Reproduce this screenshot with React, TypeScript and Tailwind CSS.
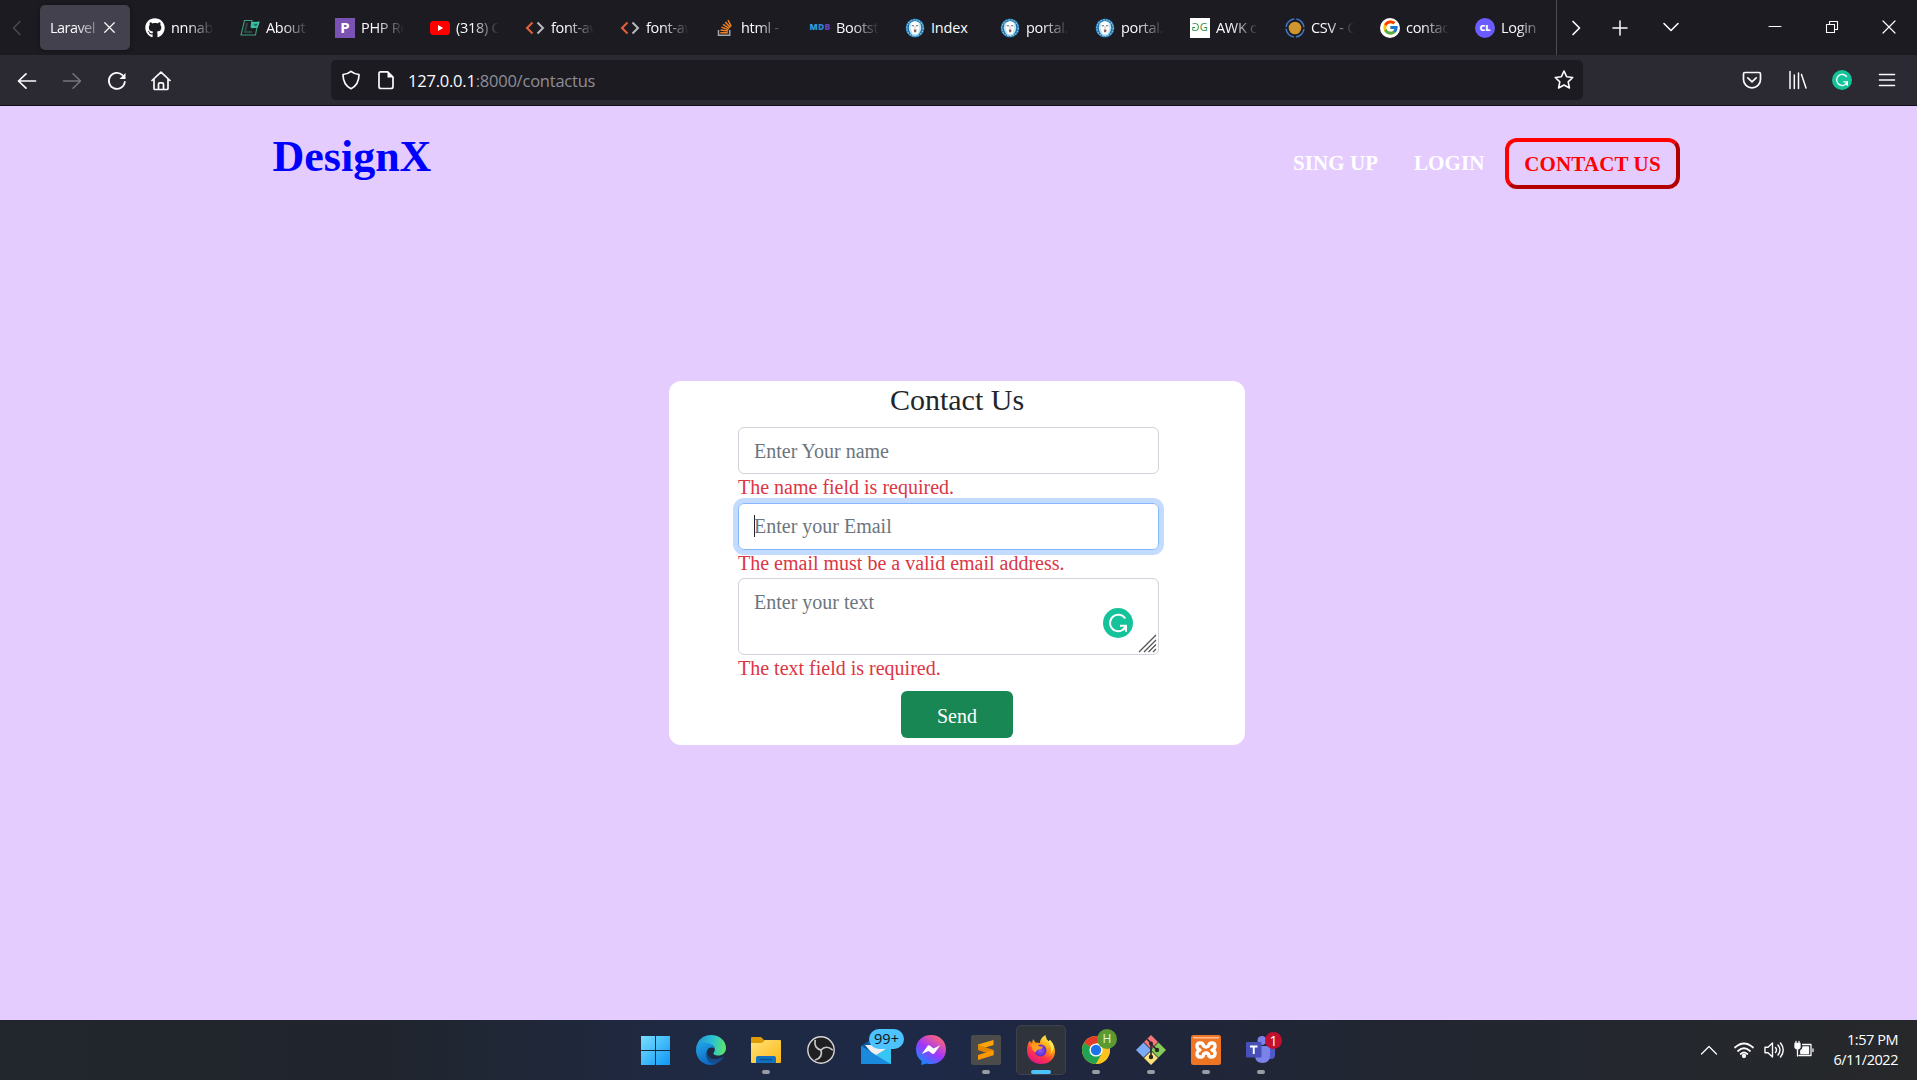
import React from "react";
import { FaGithub } from "react-icons/fa";
import { FcGoogle } from "react-icons/fc";

type P = { children?: React.ReactNode };

/* 20px outline icon with a shared stroke setup */
function Line({ d, w = 20, sw = 1.5, color = "#fbfbfe", children }: P & { d?: string; w?: number; sw?: number; color?: string }) {
  return (
    <svg width={w} height={w} viewBox="0 0 20 20" fill="none" stroke={color} strokeWidth={sw} strokeLinecap="round" strokeLinejoin="round" className="shrink-0">
      {d && <path d={d} />}
      {children}
    </svg>
  );
}

function Grammarly({ size }: { size: number }) {
  return (
    <svg width={size} height={size} viewBox="0 0 30 30" className="shrink-0">
      <circle cx="15" cy="15" r="15" fill="#15c39a" />
      <path d="M21.800 9.800A8.300 8.300 0 1 0 20 21.800" fill="none" stroke="#fff" strokeWidth="2" strokeLinecap="round" />
      <path d="M17 17.800h6v6" fill="none" stroke="#fff" strokeWidth="1.900" />
      <path d="M23.700 17v6.500l-4.500-3z" fill="#fff" />
    </svg>
  );
}

function LaradockIcon() {
  return (
    <svg width="20" height="20" viewBox="0 0 20 20" fill="none" stroke="#3f9f7c" strokeWidth="1.1">
      <path d="M4.500 2.500H12L11 9h6l-1.500 8H1z" />
      <path d="M7 5l-2 9h7" stroke="#2c4a44" strokeWidth="2" />
      <path d="M12 4.600l7-.6-1.600 5-5.600.6z" fill="#2ab59a" stroke="#3fc9aa" />
      <path d="M14 7l3-.4" stroke="#174a41" />
    </svg>
  );
}

function CodeIcon() {
  return (
    <svg width="20" height="20" viewBox="0 0 20 20" fill="none" strokeWidth="2">
      <path d="M7.500 4.500L2 10l5.500 5.500" stroke="#e4633a" />
      <path d="M12.500 4.500L18 10l-5.500 5.500" stroke="#b9b9bd" />
    </svg>
  );
}

function PortalIcon() {
  return (
    <svg width="20" height="20" viewBox="0 0 20 20">
      <circle cx="10" cy="10" r="9.400" fill="#1f6aa6" />
      <circle cx="10" cy="10" r="8.200" fill="none" stroke="#7cc3e2" strokeWidth="1.200" strokeDasharray="2 0.800" />
      <path d="M4.500 5.500q5.500-5 11 0l.8 4.500q-1 7-6.300 8-5.300-1-6.300-8z" fill="#bfe6f3" />
      <path d="M6.500 4.500q3.500-2 7 0l.7 6-2 5.500H8l-2.200-5.500z" fill="#fff" />
      <path d="M6.800 7.800h2.200M11 7.800h2.200" stroke="#5d6670" strokeWidth="1.100" />
      <path d="M8.700 11.500h2.800l-.3 2.800h-2z" fill="#8d5a55" />
      <path d="M10 8v3" stroke="#d4c2bc" strokeWidth="1" />
    </svg>
  );
}

function CsvIcon() {
  return (
    <svg width="20" height="20" viewBox="0 0 20 20">
      <circle cx="10" cy="10" r="6.300" fill="#cf962f" />
      <circle cx="10" cy="10" r="9" fill="none" stroke="#3e78c4" strokeWidth="1.500" strokeDasharray="12.140 2" strokeDashoffset="-1" />
    </svg>
  );
}

const icons: Record<string, React.ReactNode> = {
  github: <FaGithub size={20} color="#fff" />,
  about: <LaradockIcon />,
  php: <span className="flex size-5 items-center justify-center bg-[#7952b3] text-[15px] font-bold text-white">P</span>,
  youtube: (
    <svg width="20" height="20" viewBox="0 0 20 20">
      <rect y="3" width="20" height="14" rx="3.500" fill="#f00" />
      <path d="M8 7l5.200 3L8 13z" fill="#fff" />
    </svg>
  ),
  code: <CodeIcon />,
  so: (
    <svg width="20" height="20" viewBox="0 0 20 20" fill="none" strokeWidth="1.500">
      <path d="M3.500 12v5.300h11.200V12" stroke="#a5a8ab" />
      <path d="M5.300 14.700h7.500M5.500 12l7.500 1M6.400 9.100l7 2.500M8 6.300l6.200 4.200M10.300 4l5 5.500M13 2l3.200 6.400" stroke="#f48024" />
    </svg>
  ),
  mdb: (
    <span className="flex w-5 justify-center text-[8.500px] leading-none font-extrabold tracking-[0.300px]">
      <span className="text-[#2ba0dc]">M</span><span className="text-[#2d86cf]">D</span><span className="text-[#6244b8]">B</span>
    </span>
  ),
  portal: <PortalIcon />,
  awk: (
    <span className="flex size-5 items-center justify-center bg-white pb-[2px] text-[11px] leading-none text-[#2f8d46]">
      <span className="inline-block -scale-x-100 tracking-[-0.500px]">G</span><span>G</span>
    </span>
  ),
  csv: <CsvIcon />,
  google: <span className="flex size-5 items-center justify-center rounded-full bg-white"><FcGoogle size={17} /></span>,
  cl: <span className="flex size-5 items-center justify-center rounded-full bg-[#6b5cff] text-[9px] font-extrabold text-white">CL</span>,
};

const tabs: [string, string][] = [
  ["github", "nnnabi"], ["about", "About"], ["php", "PHP Re"], ["youtube", "(318) C"], ["code", "font-aw"], ["code", "font-aw"],
  ["so", "html -"], ["mdb", "Bootst"], ["portal", "Index"], ["portal", "portal."], ["portal", "portal."], ["awk", "AWK c"],
  ["csv", "CSV - C"], ["google", "contac"], ["cl", "Login"],
];

function TabStrip() {
  return (
    <div className="flex h-[55px] items-center bg-[#1c1b22] text-[14.500px] text-[#fbfbfe]">
      <div className="flex w-[40px] shrink-0 justify-center pr-[6px]">
        <Line d="M13 3.500L6.500 10l6.500 6.500" color="#4b4a52" />
      </div>
      <div className="flex h-[45px] w-[90px] shrink-0 items-center rounded-[5px] bg-[#42414d] pl-[10px] shadow-[0_0_4px_rgba(0,0,0,0.4)]">
        <span className="w-[49px] whitespace-nowrap pt-[1px] tracking-[-0.550px] [mask-image:linear-gradient(to_right,black_50%,rgba(0,0,0,0.25)_100%)]">Laravel</span>
        <span className="ml-[1px]"><Line w={19} d="M5 5l10 10M15 5L5 15" sw={1.300} /></span>
      </div>
      <div className="flex shrink-0 pl-[2px]">
        {tabs.map(([icon, label], i) => (
          <div key={i} className="flex w-[95px] items-center gap-[6px] pl-[13px]">
            <span className="flex size-5 shrink-0 items-center justify-center">{icons[icon]}</span>
            <span className={label === "Index"
              ? "w-[50px] whitespace-nowrap pt-[1px] tracking-[-0.200px]"
              : "w-[50px] whitespace-nowrap pt-[1px] tracking-[-0.300px] [mask-image:linear-gradient(to_right,black_32%,transparent_86%)]"}>{label}</span>
          </div>
        ))}
      </div>
      <div className="-ml-px h-full w-px shrink-0 bg-[#4c4b53]" />
      <div className="flex w-[38px] shrink-0 justify-center"><Line d="M7 3.500l6.500 6.500L7 16.500" sw={1.700} /></div>
      <div className="flex w-[50px] shrink-0 justify-center"><Line d="M10 3v14M3 10h14" sw={1.500} /></div>
      <div className="flex w-[51px] shrink-0 justify-center pb-[2px]"><Line d="M3 6.500l7 7 7-7" sw={1.600} /></div>
      <div className="ml-auto flex pb-[1px]">
        <div className="flex w-[57px] justify-center"><Line d="M4 9.500h12" sw={1} /></div>
        <div className="flex w-[57px] justify-center">
          <Line sw={1.100}><path d="M4.500 7.500h8v8h-8zM7.500 7.500v-3h8v8h-3" /></Line>
        </div>
        <div className="flex w-[57px] justify-center"><Line d="M4 4l12 12M16 4L4 16" sw={1.200} /></div>
      </div>
    </div>
  );
}

function Toolbar() {
  return (
    <div className="flex h-[51px] items-center border-b border-[#0f0e14] bg-[#2b2a33] pl-[4.500px] pr-[7.500px] [&>div]:shrink-0">
      <div className="flex w-[45px] justify-center pt-px"><Line d="M18.500 10H1.500M9 2.800L1.500 10 9 17.200" sw={1.700} /></div>
      <div className="flex w-[45px] justify-center pt-px"><Line d="M1.500 10h17M11 2.800l7.500 7.200-7.500 7.200" color="#77767e" /></div>
      <div className="flex w-[45px] justify-center pt-px">
        <Line sw={1.800}><path d="M17.800 11A8 8 0 1 1 15.500 4.200" /><path d="M18.500 2v6h-6z" fill="#fbfbfe" stroke="none" /></Line>
      </div>
      <div className="flex w-[43px] justify-center pt-px">
        <Line sw={1.700}><path d="M1 9.500l9-8.300 9 8.300M3 8v9.500q0 1 1 1h12q1 0 1-1V8M7.500 18.300v-5q0-1.500 1.500-1.500h2q1.500 0 1.500 1.500v5" /></Line>
      </div>
      <div className="ml-[148.500px] flex h-10 w-[1252px] items-center rounded-[5px] bg-[#1c1b22] pl-[10px] pr-[9px]">
        <Line sw={1.700}><path d="M10 1.300c2 1.700 4.700 2.900 8 3.200 0 7-2.500 11.500-8 14.200C4.500 16 2 11.500 2 4.500c3.300-.3 6-1.500 8-3.200z" /></Line>
        <span className="ml-[15px]"><Line sw={1.700}><path d="M4.500 1.800h7.200L17 7v9.500q0 2-2 2H5q-2 0-2-2v-13q0-1.700 1.500-1.700z" /><path d="M11.500 1.500v6H17.500z" fill="#fbfbfe" stroke="none" /></Line></span>
        <span className="ml-[12px] pt-[3px] text-[16.500px] tracking-[-0.220px] text-[#8f8e96]"><span className="text-[#fbfbfe]">127.0.0.1</span>:8000/contactus</span>
        <span className="ml-auto"><Line sw={1.600} d="M10 1l2.600 5.700 6.100.8-4.500 4.300 1.200 6.200L10 15l-5.400 3 1.200-6.200L1.300 7.500l6.100-.8z" /></span>
      </div>
      <div className="ml-auto flex w-[45px] justify-center"><Line sw={1.700}><path d="M3 2.500h14q1.500 0 1.500 1.500v5.500a8.500 8.300 0 0 1-17 0V4q0-1.500 1.500-1.500zM5.800 7.800L10 11.800l4.200-4" /></Line></div>
      <div className="flex w-[45px] justify-center pl-px"><Line sw={1.500}><path d="M2 1.500v17M6.300 5v13.500M10.500 3v15.500M13.500 4.500l4.500 13.500" /></Line></div>
      <div className="flex w-[45px] justify-center"><Grammarly size={20} /></div>
      <div className="flex w-[45px] justify-center pb-px"><Line sw={1.600} d="M2.500 4.500h15M2.500 10h15M2.500 15.500h15" /></div>
    </div>
  );
}

function FieldError({ children }: P) {
  return <p className="h-[29px] whitespace-nowrap leading-[26px] text-[#dc3545]">{children}</p>;
}

function Page() {
  return (
    <main className="h-[914px] bg-[#e4ccff] font-['Liberation_Serif',serif]">
      <header className="flex h-[275px] items-start justify-between pl-[272.500px] pr-[237px] pt-[26px]">
        <h1 className="text-[44px] leading-[50px] font-bold text-[#0000ff]">DesignX</h1>
        <nav className="mt-[6px] flex items-center text-[21px] leading-[45px] font-bold whitespace-nowrap text-white">
          <span className="w-[121px] tracking-[0.100px]">SING UP</span>
          <span className="w-[91px] tracking-[0.100px]">LOGIN</span>
          <span className="h-[51px] w-[175px] rounded-[12px] border-4 border-t-[#ff0000] border-r-[#b20000] border-b-[#b20000] border-l-[#ff0000] text-center tracking-[0.120px] text-[#ff0000]">CONTACT US</span>
        </nav>
      </header>
      <section className="ml-[669px] flex h-[364px] w-[576px] flex-col rounded-[12px] bg-white text-[20px] leading-[30px] text-[#6c757d]">
        <h2 className="h-[46px] text-center text-[30px] leading-[38px] text-[#212529]">Contact Us</h2>
        <form className="ml-[69px] flex w-[421px] flex-col">
          <div className="h-[47px] rounded-[6px] border border-[#ced4da] px-[15px] pt-[8px]">Enter Your name</div>
          <FieldError>The name field is required.</FieldError>
          <div className="flex h-[47px] rounded-[6px] border border-[#86b7fe] px-[15px] pt-[7px] shadow-[0_0_0_5px_#c2dbfe]">
            <span className="-mr-px mt-[4px] h-[22px] w-px bg-[#212529]" />Enter your Email
          </div>
          <div className="-mb-px"><FieldError>The email must be a valid email address.</FieldError></div>
          <div className="flex h-[77px] justify-between rounded-[6px] border border-[#ced4da] pl-[15px] pt-[8px]">
            <span>Enter your text</span>
            <span className="flex items-end gap-[5px] pr-px">
              <span className="mb-[16px]"><Grammarly size={30} /></span>
              <svg width="19" height="19" viewBox="0 0 19 19" stroke="#555" strokeWidth="1.300" className="mb-px"><path d="M1 18L18 1M6 18L18 6M10.500 18L18 10.500M15 18l3-3" /></svg>
            </span>
          </div>
          <FieldError>The text field is required.</FieldError>
        </form>
        <button className="mx-auto mt-[7px] h-[47px] w-[112px] rounded-[6px] bg-[#198754] pt-[2px] text-white">Send</button>
      </section>
    </main>
  );
}

const taskIcons: React.ReactNode[] = [
  <svg key="win" width="30" height="30" viewBox="0 0 30 30">
    <defs><linearGradient id="win" x1="0" y1="0" x2="30" y2="30" gradientUnits="userSpaceOnUse"><stop stopColor="#7be0ff" /><stop offset="1" stopColor="#0a96f5" /></linearGradient></defs>
    <path d="M0 1h14v14H0zM15 1h14v14H15zM0 16h14v14H0zM15 16h14v14H15z" fill="url(#win)" />
  </svg>,
  <svg key="edge" width="30" height="30" viewBox="0 0 30 30">
    <defs>
      <linearGradient id="e1" x1="0" y1="10" x2="30" y2="14" gradientUnits="userSpaceOnUse"><stop stopColor="#2498dc" /><stop offset=".55" stopColor="#2cc3d0" /><stop offset="1" stopColor="#62e860" /></linearGradient>
      <linearGradient id="e2" x1="3" y1="8" x2="14" y2="30" gradientUnits="userSpaceOnUse"><stop stopColor="#1fa2e8" /><stop offset="1" stopColor="#0d64c0" /></linearGradient>
    </defs>
    <path d="M0 14C1 5 7 0 15 0c9 0 15 6 15 13 0 5-4 7.500-7.500 7.500-4 0-5.500-1.500-5-2.500 3-4 .5-7.500-3-8.500C9 8 3 9 0 14z" fill="url(#e1)" />
    <path d="M0 15C.5 10 4.500 7.600 8.500 7.600c5 0 8.500 2.500 9.600 5.600C13 10.500 10 15 11 19.500 12 25.500 18 28 23 26.500 20 29 17.500 30 15 30 6 30 0 23 0 15z" fill="url(#e2)" />
    <path d="M11.500 15c-1.500 6 3 9.500 7.500 9 3.500 0 6.500-1.500 8.800-2.500C26 25.500 22 28.700 17.500 28.500 11 28 8 20 11.500 15z" fill="#144c8c" />
  </svg>,
  <svg key="folder" width="30" height="30" viewBox="0 0 30 30">
    <defs><linearGradient id="fo" x1="5" y1="5" x2="25" y2="28" gradientUnits="userSpaceOnUse"><stop stopColor="#ffdf70" /><stop offset="1" stopColor="#fcbb21" /></linearGradient></defs>
    <path d="M0 3q0-1 1-1h9l3 3h12v5H0z" fill="#dd9b08" />
    <path d="M0 8h11l3-3h15q1 0 1 1v21q0 1-1 1H1q-1 0-1-1z" fill="url(#fo)" />
    <path d="M5 28v-5q0-2 2-2h16q2 0 2 2v5z" fill="#1170bf" /><path d="M9 24.500h12" stroke="#084f91" strokeWidth="1.300" />
  </svg>,
  <svg key="obs" width="30" height="30" viewBox="0 0 30 30">
    <circle cx="15" cy="15" r="13.200" fill="#201f21" stroke="#d7d7d8" strokeWidth="1.400" />
    <g fill="none" stroke="#c9c9cb" strokeWidth="1.700" strokeLinecap="round">
      <path id="blade" d="M15 15C10.500 14 8 10.500 9.200 5.500" />
      <path d="M15 15C10.500 14 8 10.500 9.200 5.500" transform="rotate(120 15 15)" />
      <path d="M15 15C10.500 14 8 10.500 9.200 5.500" transform="rotate(240 15 15)" />
    </g>
  </svg>,
  <svg key="mail" width="30" height="30" viewBox="0 0 30 30">
    <path d="M0 11L15 1l15 10v5H0z" fill="#0c5aa8" /><path d="M4 10h22v8l-11 5z" fill="#f1eef0" />
    <path d="M0 11l15 10 15-10v18H0z" fill="#2bb2ec" /><path d="M0 29V11l30 18z" fill="#1a8bdc" /><path d="M15 20L30 11v18z" fill="#38c5f3" />
  </svg>,
  <svg key="msg" width="30" height="30" viewBox="0 0 30 30">
    <defs><linearGradient id="ms" x1="5" y1="29" x2="23" y2="1" gradientUnits="userSpaceOnUse"><stop stopColor="#0a90ff" /><stop offset=".5" stopColor="#a035ff" /><stop offset="1" stopColor="#ff6574" /></linearGradient></defs>
    <path d="M15 0c9 0 15 6.300 15 14.500S24 29 15 29c-1.700 0-3-.2-4.500-.6L5.500 30v-4C2 23.500 0 19.500 0 14.500 0 6.300 6 0 15 0z" fill="url(#ms)" />
    <path d="M5.800 19l5.700-8q1.200-1.200 2.600-.3l3.400 2.700 6.700-3.200-5.700 8.100q-1.200 1.200-2.600.3l-3.400-2.700z" fill="#fff" />
  </svg>,
  <svg key="sub" width="30" height="30" viewBox="0 0 30 30">
    <rect width="30" height="30" rx="2" fill="#4b4b4b" />
    <path d="M7 9.500L22.500 5v5L7 14.700z" fill="#ffa50a" /><path d="M7 9.800l15.500 5.300v5.200L7 15z" fill="#e58600" /><path d="M7 20l15.500-4.800v5L7 25z" fill="#ff9800" />
  </svg>,
  <svg key="ff" width="30" height="30" viewBox="0 0 30 30">
    <defs>
      <linearGradient id="f1" x1="24" y1="2" x2="9" y2="28" gradientUnits="userSpaceOnUse"><stop stopColor="#fff44f" /><stop offset=".4" stopColor="#ff980e" /><stop offset=".7" stopColor="#ff3647" /><stop offset="1" stopColor="#e31587" /></linearGradient>
      <radialGradient id="f2"><stop stopColor="#9059ff" /><stop offset="1" stopColor="#5b2bc5" /></radialGradient>
    </defs>
    <path d="M3.500 6l2.500 2L7 4l2.500 3.500L14 8q0-5 5.500-8 0 4.500 3 6.500l1.500-1.500q5 5 5 12C28.500 24.500 23 29 15 29S1 23.500 1 15.500C1 11 2 8.500 3.500 6z" fill="url(#f1)" />
    <circle cx="14.500" cy="15.500" r="6" fill="url(#f2)" />
    <path d="M4 10q6-3 9 1 1.500 1 4 .5-1 3-4.500 3-2 .5-3 3Q6 16 6 12z" fill="#ff9d1c" />
    <path d="M19.500 0q0 5 3.500 8 4 6 1 12 7-8 0-15l-1.500 1.500Q20 4 19.500 0z" fill="#ffe64a" />
  </svg>,
  <svg key="chrome" width="30" height="30" viewBox="0 0 30 30">
    <circle cx="15" cy="15" r="14" fill="#fbbc05" />
    <path d="M15 15L2.900 8A14 14 0 0 1 27.100 8z" fill="#e33b2e" /><path d="M2.900 8A14 14 0 0 0 15 29l6-10.500-6-3.500z" fill="#22a354" />
    <path d="M15 8h12.200q2 3.500 1.700 8.500A14 14 0 0 1 15 29l6-10.500z" fill="#fcc31e" />
    <circle cx="15" cy="15" r="6.600" fill="#fff" /><circle cx="15" cy="15" r="5.200" fill="#1a73e8" />
  </svg>,
  <svg key="git" width="30" height="30" viewBox="0 0 30 30">
    <path d="M15 0l7 7-7 7-7-7z" fill="#f57678" /><path d="M7.500 7.500l7.500 7.500-7.500 7.500L0 15z" fill="#7baaf7" /><path d="M22.500 7.500L30 15l-7.500 7.500L15 15z" fill="#85cc57" /><path d="M15 16l7 7-7 7-7-7z" fill="#fae17c" />
    <path d="M11 4l4 4v14M15 9l6 6" fill="none" stroke="#26262b" strokeWidth="1.600" /><circle cx="15" cy="8.500" r="2" fill="#26262b" /><circle cx="21" cy="15" r="2.200" fill="#26262b" /><circle cx="15" cy="22" r="2.200" fill="#26262b" />
  </svg>,
  <svg key="xampp" width="30" height="30" viewBox="0 0 30 30">
    <rect width="30" height="30" rx="2.500" fill="#ee7524" /><path d="M2 2h26v1.500H2z" fill="#ffbd91" />
    <path d="M9 8q-3 0-3 3t3 4q-3 1-3 4t3.500 3 3-3q2.500-2 5 0 0 3 3 3t3.500-3-3-4q3-1 3-4t-3-3-3.500 3q-2.500 2-5 0Q12.500 8 9 8z" fill="none" stroke="#fff" strokeWidth="3.400" strokeLinejoin="round" />
  </svg>,
  <svg key="teams" width="30" height="30" viewBox="0 0 30 30">
    <circle cx="16" cy="5.500" r="4.500" fill="#7b83eb" /><path d="M20 12h9v8q0 4-4 4h-5z" fill="#5059c9" />
    <path d="M9 11h15v9q0 8-7.500 8T9 20z" fill="#7b83eb" /><rect y="7" width="15.500" height="15.500" rx="1" fill="#474fb8" />
    <path d="M4 11.500h7.500M7.750 11.500v7.500" stroke="#fff" strokeWidth="1.900" />
  </svg>,
];

function Taskbar() {
  return (
    <footer className="flex h-[60px] bg-[linear-gradient(to_right,#22272d_0%,#20252d_20%,#1f2942_35%,#1d2947_48%,#20263b_60%,#222630_75%,#26282a_100%)] pr-[19px] text-white">
      <div className="ml-[631px] flex gap-[5px] pt-[5px]">
        {taskIcons.map((icon, i) => (
          <div key={i} className={i === 7 ? "relative flex h-[50px] w-[50px] flex-col items-center rounded-[5px] border border-[#3e424c] bg-[#2f333c] pt-[9px]" : "relative flex h-[50px] w-[50px] flex-col items-center pt-[10px]"}>
            {icon}
            {i === 7 && <span className="mt-[5px] h-[4px] w-[20px] shrink-0 rounded-full bg-[#4cc2ff]" />}
            {(i === 2 || i === 6 || i > 7) && <span className="mt-[5px] h-[4px] w-[8px] rounded-full bg-[#999ca3]" />}
            {i === 4 && <span className="absolute top-[4px] left-[18px] flex h-[20px] w-[35px] items-center justify-center rounded-full bg-[#4cc2ff] text-[14.500px] text-[#111]">99+</span>}
            {i === 8 && <span className="absolute top-[4px] left-[26px] flex size-5 items-center justify-center rounded-full bg-[#5b9a31] text-[12px] text-[#e8f3df]">H</span>}
            {i === 11 && <span className="absolute top-[7px] left-[29px] flex size-[17px] items-center justify-center rounded-full bg-[#c50f2f] text-[14px]">1</span>}
          </div>
        ))}
      </div>
      <div className="ml-auto flex items-center">
        <span className="mr-[15px]"><Line d="M2.500 14L10 6.500l7.500 7.500" sw={1.300} /></span>
        <span className="mr-[10px]">
          <Line sw={1.700}><path d="M1 7.500q9-8 18 0M4 11q6-5.500 12 0M6.700 14q3.300-3 6.600 0" /><circle cx="10" cy="16" r="1.300" fill="#fff" /></Line>
        </span>
        <span className="mr-[10px]">
          <Line sw={1.400}><path d="M1 7.200h3L8.500 3v14L4 12.800H1zM11.500 7.500q2 2.500 0 5M14 5q4 5 0 10M16.500 3q5.500 7 0 14" /></Line>
        </span>
        <span className="mr-[17px]">
          <Line sw={1.300}><path d="M8.500 4.500h8.500v11H5" /><path d="M9 7h5.500v6.500H6.800v-3q2.200-1 2.200-3.500z" fill="#fff" /><path d="M1 3.500h5v4q-2.500 3-5 0zM2 1.500v3M5 1.500v3M3.500 8v8M19 9v2.500" fill="#fff" /></Line>
        </span>
        <div className="w-[67px] text-right text-[14.500px] leading-[20px] whitespace-nowrap tracking-[-0.450px]"><div>1:57 PM</div><div>6/11/2022</div></div>
      </div>
    </footer>
  );
}

export default function App() {
  return (
    <div className="h-[1080px] w-[1917px] overflow-hidden font-['Open_Sans','Noto_Sans',sans-serif]">
      <TabStrip />
      <Toolbar />
      <Page />
      <Taskbar />
    </div>
  );
}
